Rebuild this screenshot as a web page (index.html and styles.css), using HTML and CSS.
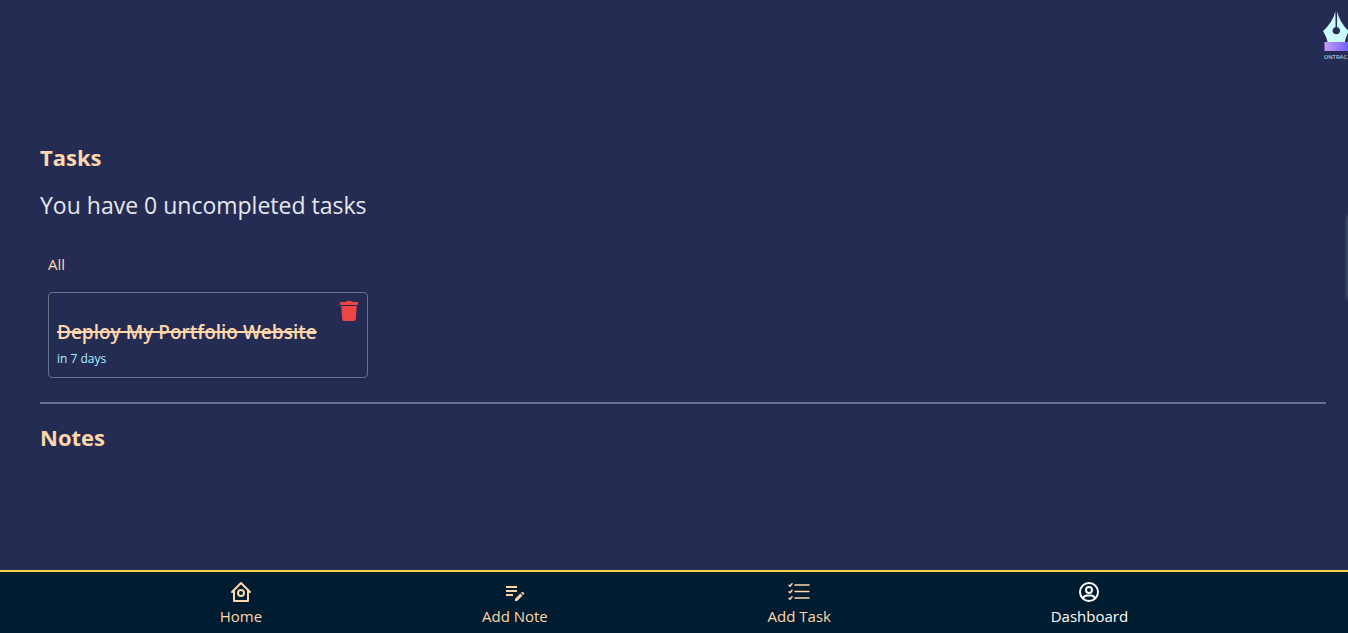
FILE: index.html
```html
<!DOCTYPE html>
<html lang="en">
<head>
<meta charset="utf-8">
<meta name="viewport" content="width=device-width, initial-scale=1">
<title>Ontrack</title>
<link rel="stylesheet" href="styles.css">
</head>
<body>
<header class="header">
  <svg class="logo" viewBox="0 0 26 52" role="img" aria-label="Ontrack">
    <defs>
      <linearGradient id="band" x1="0" x2="1" y1="0" y2="0"><stop offset="0" stop-color="#c79bf5"/><stop offset="1" stop-color="#6a5df5"/></linearGradient>
    </defs>
    <path fill="#c9fbff" fill-rule="evenodd" d="M13.4 1 C12 8 7 16 1 21 C3 25 5 28 5.500 32 H23 C23.500 28 25 25 27 21 C21 16 16.500 8 15.200 1 L15 17 A3.700 3.700 0 1 1 13.600 17 Z"/>
    <rect x="2.500" y="32" width="25" height="9" fill="url(#band)"/>
    <text x="2" y="49" class="logo-text">ONTRAC</text>
  </svg>
</header>
<main class="main">
  <section class="section">
    <h2 class="heading">Tasks</h2>
    <p class="summary">You have 0 uncompleted tasks</p>
    <div class="group">
      <h3 class="group-title">All</h3>
      <article class="card">
        <button class="delete" type="button" aria-label="Delete task">
          <svg class="delete-icon" viewBox="0 0 18 20"><path fill="currentColor" d="M6 1 Q6 0 7 0 H11 Q12 0 12 1 H17 Q18 1 18 2 V3 Q18 4 17 4 H1 Q0 4 0 3 V2 Q0 1 1 1 Z M1.300 5 H16.700 L15.800 18.200 Q15.700 20 14 20 H4 Q2.300 20 2.200 18.200 Z"/></svg>
        </button>
        <h4 class="card-title">Deploy My Portfolio Website</h4>
        <p class="due">in 7 days</p>
      </article>
    </div>
  </section>
  <hr class="divider">
  <section class="section">
    <h2 class="heading">Notes</h2>
  </section>
</main>
<div class="edge-glow"></div>
<nav class="nav">
  <a class="nav-item" href="#home">
    <svg class="icon" viewBox="0 0 24 24" fill="none" stroke="currentColor" stroke-width="2"><path stroke-linejoin="round" stroke-linecap="round" d="M3 12 L12 3 L21 12 M5 11 V21 H19 V11"/><circle cx="12" cy="13" r="3"/></svg>
    Home
  </a>
  <a class="nav-item" href="#note">
    <svg class="icon" viewBox="0 0 24 24" fill="currentColor"><path d="M3 6h11v2H3zM3 10h11v2H3zM3 14h7v2H3zM18.010 12.870l.710-.710a1 1 0 0 1 1.410 0l.710.710a1 1 0 0 1 0 1.410l-.710.710zM17.300 13.580l-5.300 5.300V21h2.120l5.300-5.300z"/></svg>
    Add Note
  </a>
  <a class="nav-item" href="#task">
    <svg class="icon" viewBox="0 0 24 24" fill="none" stroke="currentColor" stroke-width="1.500" stroke-linecap="round" stroke-linejoin="round"><path d="M8 5H22M8 11.500H22M8 18H22M2 5.300L3 6.300L5 3.700M2 11.800L3 12.800L5 10.200M2 18.300L3 19.300L5 16.700"/></svg>
    Add Task
  </a>
  <a class="nav-item nav-item-active" href="#dashboard" aria-current="page">
    <svg class="icon" viewBox="0 0 24 24" fill="none" stroke="currentColor" stroke-width="2"><circle cx="12" cy="12" r="9"/><circle cx="12" cy="10" r="3"/><path d="M6 18.500Q7 15.500 10 15.500H14Q17 15.500 18 18.500"/></svg>
    Dashboard
  </a>
</nav>
</body>
</html>
```
FILE: styles.css
```css
* { box-sizing: border-box; margin: 0; padding: 0; }
body {
  min-height: 100vh;
  display: flex;
  flex-direction: column;
  background: #252c53;
  color: #fed7aa;
  font: 15px/24px "Segoe UI", "Open Sans", "Noto Sans", sans-serif;
  overflow-x: hidden;
}
.header { display: flex; justify-content: flex-end; padding-top: 10px; }
.logo { width: 26px; height: 52px; overflow: hidden; }
.logo-text { font: 6px Roboto, sans-serif; fill: #b7dfe9; }
.main { flex: 1; padding: 79px 22px 80px 40px; }
.heading { font-size: 22px; line-height: 32px; font-weight: 700; }
.summary { margin-top: 16px; font-size: 23px; line-height: 32px; color: #e5e7eb; }
.group { margin-top: 31px; padding: 0 8px; }
.group-title { font-size: 15px; font-weight: 400; }
.card {
  display: flex;
  flex-direction: column;
  width: 320px;
  max-width: 100%;
  margin-top: 16px;
  padding: 8px;
  border: 1px solid #64748b;
  border-radius: 4px;
  box-shadow: 0 2px 4px rgba(0, 0, 0, .08);
}
.delete { align-self: flex-end; display: flex; border: 0; background: none; color: #ef4444; cursor: pointer; }
.delete-icon { width: 20px; height: 20px; }
.card-title { margin-top: -3px; font-size: 19px; line-height: 28px; font-weight: 600; text-decoration: line-through 2px; }
.due { margin-top: 3px; font-size: 12px; line-height: 20px; color: #a5f3fc; }
.divider { margin: 24px 0 17px; border: 0; border-top: 2px solid #64748b; }
.edge-glow { position: fixed; right: -4px; top: 215px; width: 4px; height: 84px; box-shadow: 0 0 4px #64748b; }
.nav {
  position: fixed;
  right: 0;
  bottom: 0;
  left: 0;
  display: flex;
  justify-content: space-evenly;
  padding: 8px 0 5px;
  border-top: 2px solid #fcd34d;
  background: #001c30;
}
.nav-item { display: flex; flex-direction: column; align-items: center; color: #fed7aa; text-decoration: none; }
.nav-item-active { color: #fff; }
.icon { width: 24px; height: 24px; }
```
